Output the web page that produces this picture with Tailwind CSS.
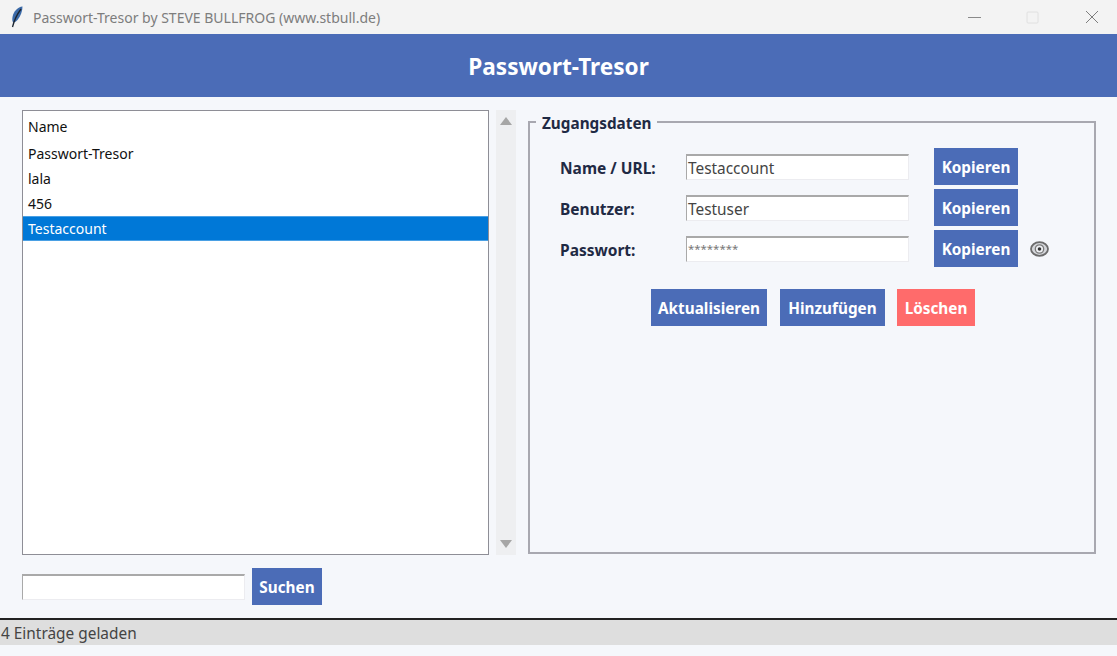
<!DOCTYPE html>
<html lang="de">
<head>
  <meta charset="UTF-8">
  <title>Passwort-Tresor</title>
  <script src="https://cdn.jsdelivr.net/npm/@tailwindcss/browser@4"></script>
</head>
<body class="w-[1117px] h-[656px] overflow-hidden flex flex-col bg-[#f5f7fb] font-['Noto_Sans',sans-serif] text-[#1a1a2e]">

  <!-- window title bar -->
  <div class="h-[34px] bg-[#f3f3f3] flex items-center shrink-0">
    <svg class="ml-[10px] w-[14px] h-[22px]" viewBox="0 0 14 22">
      <path d="M12.5 .5C8 1 3.500 5 2.500 11c-.4 2.500-.2 4 .5 5.500 1.500 0 3-.8 4.500-2.500C10.500 10.500 12.500 5 12.500 .5z" fill="#3b6aa8"/>
      <path d="M11 3C8 7 4.500 13 2.500 21" stroke="#1c2530" stroke-width="1.300" fill="none"/>
    </svg>
    <span class="ml-[9px] text-[14px] text-[#7d7d7d] whitespace-nowrap">Passwort-Tresor by STEVE BULLFROG (www.stbull.de)</span>
    <div class="ml-auto flex items-center">
      <svg class="w-[13px] h-[13px] mr-[45px]" viewBox="0 0 13 13"><path d="M0 6.500h13" stroke="#8a8a8a" stroke-width="1"/></svg>
      <svg class="w-[13px] h-[13px] mr-[46px]" viewBox="0 0 13 13"><rect x="1" y="1" width="11" height="11" rx="1" stroke="#e0e0e0" fill="none"/></svg>
      <svg class="w-[14px] h-[14px] mr-[18px]" viewBox="0 0 14 14"><path d="M1 1l12 12M13 1L1 13" stroke="#7d7d7d" stroke-width="1"/></svg>
    </div>
  </div>

  <!-- header -->
  <div class="h-[63px] bg-[#4b6cb7] flex items-center justify-center shrink-0 pt-[2px]">
    <h1 class="text-[22.6px] font-bold text-white">Passwort-Tresor</h1>
  </div>

  <div class="flex-1 flex flex-col">
    <div class="h-[458px] flex pl-[22px] pt-[13px]">
      <!-- list -->
      <div class="w-[467px] h-[445px] bg-white border border-[#8e8e96] text-[14px] text-[#111]">
        <div class="h-[30px] pl-[5px] flex items-center">Name</div>
        <div class="h-[25px] pl-[5px] flex items-center">Passwort-Tresor</div>
        <div class="h-[25px] pl-[5px] flex items-center">lala</div>
        <div class="h-[25px] pl-[5px] flex items-center">456</div>
        <div class="h-[25px] pl-[5px] flex items-center bg-[#0078d7] border-y border-[#4aa0e4] text-white">Testaccount</div>
      </div>
      <!-- scrollbar -->
      <div class="ml-[7px] w-[20px] h-[445px] bg-[#eeeff1] flex flex-col items-center justify-between py-[7px]">
        <svg class="w-[12px] h-[8px]" viewBox="0 0 12 8"><path d="M6 0l6 8H0z" fill="#a6a6a6"/></svg>
        <svg class="w-[12px] h-[8px]" viewBox="0 0 12 8"><path d="M0 0h12L6 8z" fill="#a6a6a6"/></svg>
      </div>
      <!-- details -->
      <div class="relative ml-[12px] mt-[11px] w-[568px] h-[433px] border-2 border-[#a8a8b0] pt-[25px]">
        <span class="absolute left-[6px] top-[-9px] px-[6px] bg-[#f5f7fb] text-[15.3px] font-bold leading-[19px] text-[#1f2a44]">Zugangsdaten</span>
        <div class="flex items-center h-[37px] mb-[4px]">
          <span class="w-[156px] pl-[30px] pt-[4px] text-[15.5px] font-bold text-[#1f2a44]">Name / URL:</span>
          <div class="w-[223px] h-[26px] bg-white border-t-2 border-l border-r border-b border-t-[#a9a9a9] border-l-[#a9a9a9] border-r-[#ececf0] border-b-[#ececf0] pl-[1px] text-[15.4px] leading-[26px] text-[#444]">Testaccount</div>
          <button class="ml-[25px] w-[84px] h-[37px] pt-[2px] bg-[#4b6cb7] text-white text-[15.3px] font-bold">Kopieren</button>
        </div>
        <div class="flex items-center h-[37px] mb-[4px]">
          <span class="w-[156px] pl-[30px] pt-[4px] text-[15.5px] font-bold text-[#1f2a44]">Benutzer:</span>
          <div class="w-[223px] h-[26px] bg-white border-t-2 border-l border-r border-b border-t-[#a9a9a9] border-l-[#a9a9a9] border-r-[#ececf0] border-b-[#ececf0] pl-[1px] text-[15.4px] leading-[26px] text-[#444]">Testuser</div>
          <button class="ml-[25px] w-[84px] h-[37px] pt-[2px] bg-[#4b6cb7] text-white text-[15.3px] font-bold">Kopieren</button>
        </div>
        <div class="flex items-center h-[37px]">
          <span class="w-[156px] pl-[30px] pt-[4px] text-[15.5px] font-bold text-[#1f2a44]">Passwort:</span>
          <div class="w-[223px] h-[26px] bg-white border-t-2 border-l border-r border-b border-t-[#a9a9a9] border-l-[#a9a9a9] border-r-[#ececf0] border-b-[#ececf0] pl-[1px] text-[11.4px] leading-[22px] text-[#777]">********</div>
          <button class="ml-[25px] w-[84px] h-[37px] pt-[2px] bg-[#4b6cb7] text-white text-[15.3px] font-bold">Kopieren</button>
          <svg class="ml-[12px] w-[19px] h-[16px]" viewBox="0 0 19 16">
            <ellipse cx="9.500" cy="8" rx="8.500" ry="6.800" fill="#d4d6da" stroke="#6b6b6b" stroke-width="1.800"/>
            <circle cx="9.500" cy="8" r="4.200" fill="#eef0f3" stroke="#7a7a7a" stroke-width="1.300"/>
            <circle cx="9.500" cy="8" r="1.800" fill="#333"/>
          </svg>
        </div>
        <div class="flex items-center mt-[22px] pl-[121px]">
          <button class="w-[116px] h-[37px] pt-[2px] bg-[#4b6cb7] text-white text-[15.3px] font-bold">Aktualisieren</button>
          <button class="ml-[13px] w-[105px] h-[37px] pt-[2px] bg-[#4b6cb7] text-white text-[15.3px] font-bold">Hinzufügen</button>
          <button class="ml-[12px] w-[78px] h-[37px] pt-[2px] bg-[#ff6b6b] text-white text-[15.3px] font-bold">Löschen</button>
        </div>
      </div>
    </div>

    <!-- search -->
    <div class="flex items-center pl-[22px] pt-[13px]">
      <div class="w-[223px] h-[26px] bg-white border-t-2 border-l border-r border-b border-t-[#a9a9a9] border-l-[#a9a9a9] border-r-[#ececf0] border-b-[#ececf0]"></div>
      <button class="ml-[7px] w-[70px] h-[37px] pt-[2px] bg-[#4b6cb7] text-white text-[15.3px] font-bold">Suchen</button>
    </div>

    <!-- status bar -->
    <div class="mt-[13px] h-[27px] bg-[#dedede] border-t-2 border-[#222] pl-[1px] text-[15.4px] leading-[27px] text-[#444]">4 Einträge geladen</div>
  </div>
</body>
</html>
